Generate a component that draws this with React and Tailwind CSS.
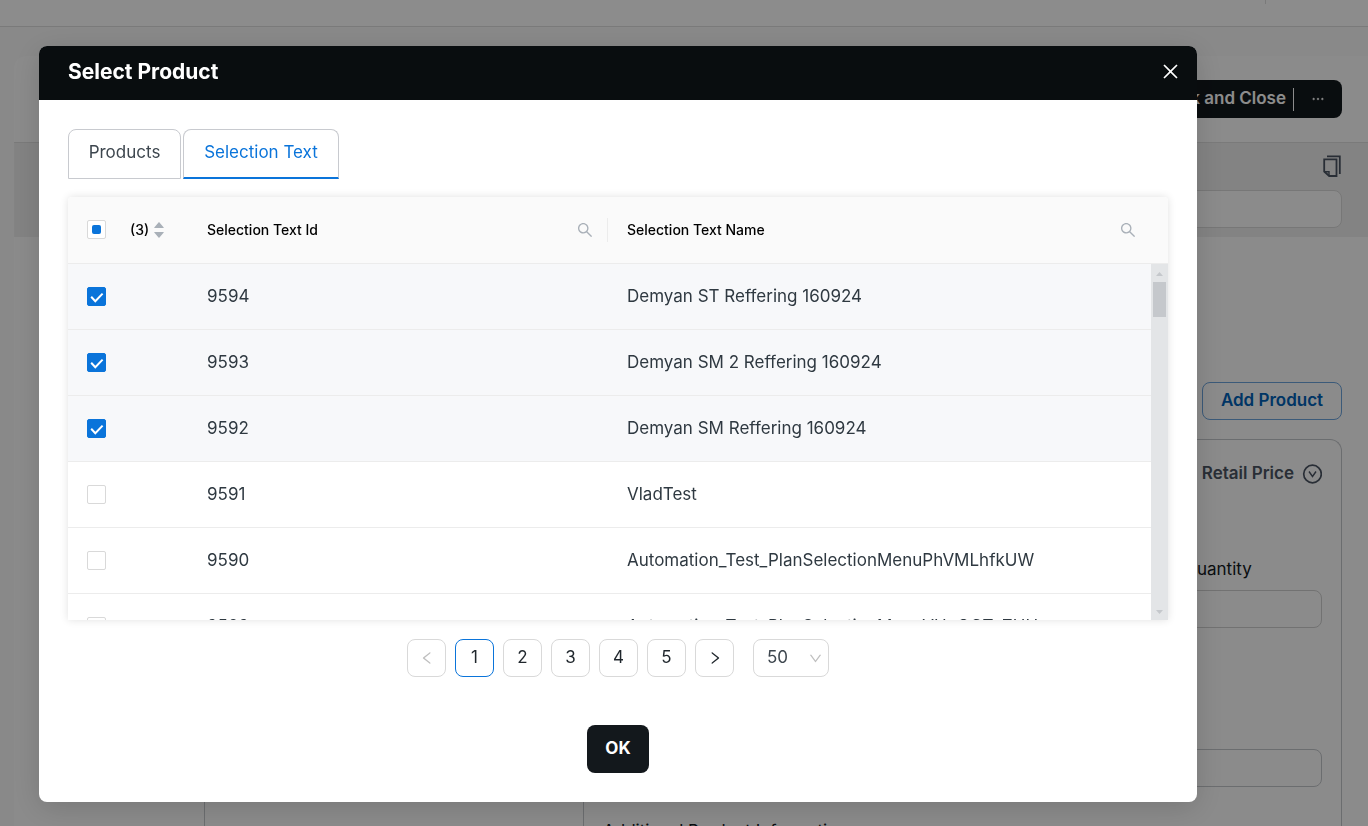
import { useEffect, useRef, useState } from "react";
import {
    AiFillCaretDown,
    AiFillCaretUp,
    AiOutlineClose,
    AiOutlineDown,
    AiOutlineEllipsis,
    AiOutlineLeft,
    AiOutlineRight,
    AiOutlineSearch,
} from "react-icons/ai";

const rows = [
    { id: "9594", name: "Demyan ST Reffering 160924" },
    { id: "9593", name: "Demyan SM 2 Reffering 160924" },
    { id: "9592", name: "Demyan SM Reffering 160924" },
    { id: "9591", name: "VladTest" },
    { id: "9590", name: "Automation_Test_PlanSelectionMenuPhVMLhfkUW" },
    { id: "9589", name: "Automation_Test_PlanSelectionMenuVHqOCTeZHH" },
];

function Checkbox({ checked, indeterminate = false, onChange, label }) {
    const ref = useRef(null);

    useEffect(() => {
        ref.current.indeterminate = indeterminate;
    }, [indeterminate]);

    return (
        <span className="relative grid size-[19px] place-items-center">
            <input
                ref={ref}
                type="checkbox"
                aria-label={label}
                checked={checked}
                onChange={onChange}
                className="size-[19px] appearance-none rounded-xs border border-[#d9d9d9] bg-white checked:border-[#0a74da] checked:bg-[#0a74da]"
            />
            {checked && (
                <svg viewBox="0 0 19 19" className="pointer-events-none absolute inset-0" fill="none" stroke="#fff" strokeWidth="2">
                    <path d="M4.2 9.8 8.3 14.2 15.6 6.6" />
                </svg>
            )}
            {indeterminate && (
                <span className="pointer-events-none absolute inset-0 grid place-items-center">
                    <span className="size-[9px] rounded-xs bg-[#0a74da]" />
                </span>
            )}
        </span>
    );
}

function Columns() {
    return (
        <colgroup>
            <col className="w-[119px]" />
            <col className="w-[421px]" />
            <col />
        </colgroup>
    );
}

function CopyIcon() {
    return (
        <svg width="19" height="23" viewBox="0 0 19 23" fill="none" stroke="#4b5563" strokeWidth="1.8">
            <path d="M1.2 4.3h12.3v16.7H6.2L1.2 16.5z" />
            <path d="M1.2 16.8H6V21" strokeWidth="1.4" />
            <path d="M4 1.3h12.8V19" />
        </svg>
    );
}

function CircleDownIcon() {
    return (
        <svg width="20" height="20" viewBox="0 0 20 20" fill="none" stroke="currentColor">
            <circle cx="10.5" cy="10" r="8.8" strokeWidth="1.7" />
            <path d="M7 7.5 10.5 12.5 14 7.5" strokeWidth="1.4" />
        </svg>
    );
}

// Page that stays behind the dialog
function ProductPage() {
    return (
        <div className="flex h-screen flex-col overflow-hidden bg-[#f9f9f9]">
            <header className="flex h-[27px] shrink-0 justify-end border-b border-[#dfdfdf] bg-white pr-[102px]">
                <span className="h-1 w-px bg-[#dfdfdf]" />
            </header>
            <main className="mt-[29px] ml-[14px] flex min-h-0 flex-1 flex-col rounded-tl-xl bg-[#fdfdfd]">
                <div className="flex h-[87px] shrink-0 justify-end border-b border-[#dfdfdf] pt-6 pr-[26px]">
                    <div className="flex h-[38px] items-center rounded-lg bg-[#12181c] text-white">
                        <button type="button" className="pr-[7px] pl-5 text-[17px] font-semibold">
                            Back and Close
                        </button>
                        <span className="h-[23px] w-px bg-white" />
                        <button type="button" aria-label="More actions" className="px-4">
                            <AiOutlineEllipsis size={16} strokeWidth={30} />
                        </button>
                    </div>
                </div>
                <div className="h-[94px] shrink-0 bg-[#efefef] pt-3 pr-[26px] pl-[26px]">
                    <div className="flex justify-end">
                        <button type="button" aria-label="Copy">
                            <CopyIcon />
                        </button>
                    </div>
                    <input
                        aria-label="Product"
                        className="mt-3 block h-[38px] w-full rounded-lg border border-[#d9d9d9] bg-[#fdfdfd]"
                    />
                </div>
                <div className="flex min-h-0 flex-1 pr-[26px]">
                    <aside className="mt-[202px] w-[191px] border-r border-[#c4c7cb]" />
                    <div className="flex flex-1 flex-col pt-[145px] pl-[378px]">
                        <button
                            type="button"
                            className="h-[38px] w-[140px] shrink-0 self-end rounded-lg border border-[#6ca4dd] text-[17px] font-semibold text-[#0062b8]"
                        >
                            Add Product
                        </button>
                        <section className="mt-[19px] flex-1 overflow-hidden rounded-t-xl border border-b-0 border-[#c4c7cb] px-[19px]">
                            <div className="mt-5 flex h-7 items-center justify-end gap-2 text-[17px] font-semibold text-[#4b5563]">
                                <span>Total Retail Price</span>
                                <CircleDownIcon />
                            </div>
                            <div className="mt-[67px] flex justify-end">
                                <label className="w-[177px] text-[17px] leading-7 text-[#12181c]">
                                    Max Quantity
                                    <input className="mt-[7px] block h-[38px] w-full rounded-lg border border-[#d0d0d0]" />
                                </label>
                            </div>
                            <input
                                aria-label="Price"
                                className="mt-[121px] block h-[38px] w-full rounded-lg border border-[#c4c7cb]"
                            />
                            <p className="mt-8 text-[17px] leading-6 text-[#12181c]">Additional Product Information</p>
                        </section>
                    </div>
                </div>
            </main>
        </div>
    );
}

function SelectionTable({ selected, onToggle, onToggleAll }) {
    const count = selected.length;

    return (
        <div className="h-[423px] overflow-hidden rounded-t-sm bg-white shadow-[0_0_8px_rgba(0,0,0,0.12)]">
            <table className="w-full table-fixed border-collapse bg-[#fafafa] text-left text-sm font-medium text-black">
                <Columns />
                <thead>
                    <tr className="h-[66px] border-b border-[#ececec]">
                        <th scope="col" className="pl-[19px] font-medium">
                            <div className="flex items-center">
                                <Checkbox
                                    label="Select all"
                                    checked={count === rows.length}
                                    indeterminate={count > 0 && count < rows.length}
                                    onChange={onToggleAll}
                                />
                                <button type="button" className="ml-6 flex items-center gap-[3px]">
                                    ({count})
                                    <span className="flex flex-col text-[#a9b0b8]">
                                        <AiFillCaretUp size={14} className="-mb-1" />
                                        <AiFillCaretDown size={14} />
                                    </span>
                                </button>
                            </div>
                        </th>
                        <th scope="col" className="pl-5 font-medium">
                            <div className="flex h-6 items-center justify-between border-r border-[#ececec] pr-[13px]">
                                Selection Text Id
                                <button type="button" aria-label="Search by id" className="text-[#a9b0b8]">
                                    <AiOutlineSearch size={18} />
                                </button>
                            </div>
                        </th>
                        <th scope="col" className="pr-[31px] pl-[19px] font-medium">
                            <div className="flex h-6 items-center justify-between">
                                Selection Text Name
                                <button type="button" aria-label="Search by name" className="text-[#a9b0b8]">
                                    <AiOutlineSearch size={18} />
                                </button>
                            </div>
                        </th>
                    </tr>
                </thead>
            </table>
            <div className="flex h-[357px]">
                <div className="min-w-0 flex-1 overflow-hidden">
                    <table className="w-full table-fixed border-collapse text-[17px] text-[#2f3941]">
                        <Columns />
                        <tbody>
                            {rows.map((row) => {
                                const checked = selected.includes(row.id);
                                return (
                                    <tr
                                        key={row.id}
                                        className={checked ? "h-[66px] border-b border-[#ececec] bg-[#f7f8fa]" : "h-[66px] border-b border-[#ececec]"}
                                    >
                                        <td className="pl-[19px]">
                                            <Checkbox label={`Select ${row.id}`} checked={checked} onChange={() => onToggle(row.id)} />
                                        </td>
                                        <td className="pl-5">{row.id}</td>
                                        <td className="pl-[19px] whitespace-nowrap">{row.name}</td>
                                    </tr>
                                );
                            })}
                        </tbody>
                    </table>
                </div>
                <div className="flex w-[17px] flex-col items-center justify-between bg-[#e3e5e7] text-[#c5c8cc]">
                    <div className="flex flex-col items-center">
                        <svg width="17" height="18" viewBox="0 0 17 18" fill="currentColor">
                            <path d="M5 12 8.5 8 12 12z" />
                        </svg>
                        <div className="h-[35px] w-[13px] bg-[#c5c8cc]" />
                    </div>
                    <svg width="17" height="18" viewBox="0 0 17 18" fill="currentColor">
                        <path d="M5 7 8.5 11 12 7z" />
                    </svg>
                </div>
            </div>
        </div>
    );
}

function Pagination() {
    const [page, setPage] = useState(1);

    return (
        <nav aria-label="Pages" className="mt-[19px] flex justify-center gap-[9px] text-[17px] text-[#1f262c]">
            <button
                type="button"
                aria-label="Previous page"
                disabled={page === 1}
                onClick={() => setPage(page - 1)}
                className="grid h-[38px] w-[39px] place-items-center rounded-lg border border-[#d9d9d9] disabled:text-[#bfbfbf]"
            >
                <AiOutlineLeft size={16} />
            </button>
            {[1, 2, 3, 4, 5].map((n) => (
                <button
                    key={n}
                    type="button"
                    onClick={() => setPage(n)}
                    className={
                        n === page
                            ? "h-[38px] w-[39px] rounded-lg border border-[#0a74da]"
                            : "h-[38px] w-[39px] rounded-lg border border-[#d9d9d9]"
                    }
                >
                    {n}
                </button>
            ))}
            <button
                type="button"
                aria-label="Next page"
                disabled={page === 5}
                onClick={() => setPage(page + 1)}
                className="grid h-[38px] w-[39px] place-items-center rounded-lg border border-[#d9d9d9] disabled:text-[#bfbfbf]"
            >
                <AiOutlineRight size={16} />
            </button>
            <div className="relative ml-[10px]">
                <select
                    aria-label="Rows per page"
                    defaultValue="50"
                    className="h-[38px] w-[76px] appearance-none rounded-lg border border-[#d9d9d9] bg-white pl-[13px] text-[#3d464e]"
                >
                    <option>10</option>
                    <option>50</option>
                    <option>100</option>
                </select>
                <AiOutlineDown size={15} className="pointer-events-none absolute top-3 right-[6px] text-[#bfbfbf]" />
            </div>
        </nav>
    );
}

function SelectProductDialog() {
    const [selected, setSelected] = useState(["9594", "9593", "9592"]);

    const toggle = (id) => setSelected((prev) => (prev.includes(id) ? prev.filter((x) => x !== id) : [...prev, id]));
    const toggleAll = () => setSelected((prev) => (prev.length === rows.length ? [] : rows.map((r) => r.id)));

    return (
        <div
            role="dialog"
            aria-modal="true"
            aria-labelledby="dialog-title"
            className="overflow-hidden rounded-lg bg-white shadow-[0_6px_30px_rgba(0,0,0,0.15)]"
        >
            <div className="flex h-[54px] items-center justify-between bg-[#090d0f] pr-4 pb-[3px] pl-[29px] text-white">
                <h2 id="dialog-title" className="text-[21px] font-bold">
                    Select Product
                </h2>
                <button type="button" aria-label="Close">
                    <AiOutlineClose size={21} />
                </button>
            </div>
            <div className="p-[29px]">
                <div role="tablist" className="mb-[18px] flex gap-[2px] text-[17px]">
                    <button
                        type="button"
                        role="tab"
                        aria-selected="false"
                        className="h-[50px] w-[113px] rounded-t-lg border border-[#c8cacf] pb-[2px] text-[#3d464e]"
                    >
                        Products
                    </button>
                    <button
                        type="button"
                        role="tab"
                        aria-selected="true"
                        className="h-[50px] w-[156px] rounded-t-lg border border-b-2 border-[#c8cacf] border-b-[#0a74da] pb-px text-[#0a74da]"
                    >
                        Selection Text
                    </button>
                </div>
                <SelectionTable selected={selected} onToggle={toggle} onToggleAll={toggleAll} />
                <Pagination />
                <div className="mt-12 flex justify-center">
                    <button type="button" className="h-12 w-[62px] rounded-lg bg-[#13181c] text-[17px] font-bold text-white">
                        OK
                    </button>
                </div>
            </div>
        </div>
    );
}

function App() {
    return (
        <div className="font-['Inter',sans-serif]">
            <ProductPage />
            <div className="fixed inset-0 overflow-hidden bg-black/45 pt-[46px] pr-[171px] pl-[39px]">
                <SelectProductDialog />
            </div>
        </div>
    );
}

export default App;
